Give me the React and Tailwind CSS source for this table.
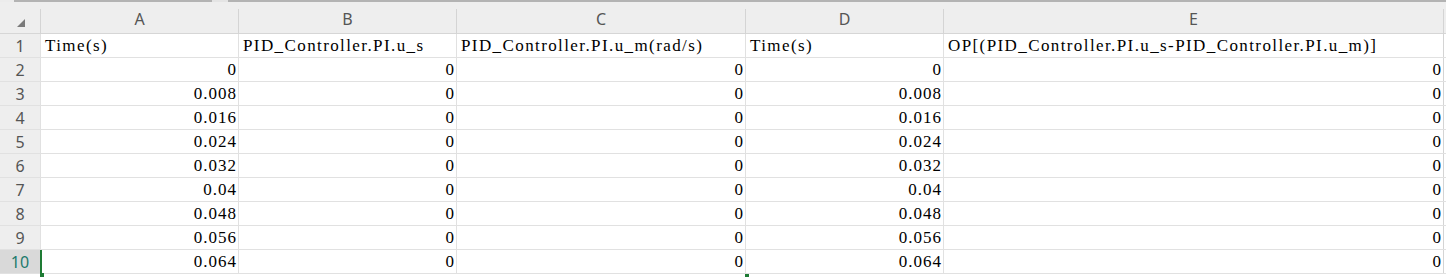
import React from "react";

const cols = [
  { key: "A", w: "w-[198px]" },
  { key: "B", w: "w-[218px]" },
  { key: "C", w: "w-[289px]" },
  { key: "D", w: "w-[198px]" },
  { key: "E", w: "w-[500px]" },
];

const header = [
  "Time(s)",
  "PID_Controller.PI.u_s",
  "PID_Controller.PI.u_m(rad/s)",
  "Time(s)",
  "OP[(PID_Controller.PI.u_s-PID_Controller.PI.u_m)]",
];

const times = ["0", "0.008", "0.016", "0.024", "0.032", "0.04", "0.048", "0.056", "0.064"];

const rows = times.map((t) => [t, "0", "0", t, "0"]);

const cellFont = { fontFamily: '"Liberation Serif", "Times New Roman", serif' };
const uiFont = { fontFamily: '"Noto Sans", "Open Sans", sans-serif' };

export default function App() {
  return (
    <div className="relative w-[1446px] h-[277px] overflow-hidden bg-white">
      {/* top edge */}
      <div className="flex h-[2px]">
        <div className="w-[14px] bg-[#ececec]" />
        <div className="w-[198px] bg-[#b3b3b3]" />
        <div className="w-[16px] bg-[#e4e4e4]" />
        <div className="flex-1 bg-[#b3b3b3]" />
      </div>
      {/* column header */}
      <div className="flex h-[32px] bg-[#eeeeee] border-b border-[#d6d6d6]" style={uiFont}>
        <div className="w-[40px] shrink-0 flex items-end justify-center pb-[6px]">
          <svg width="9" height="8" viewBox="0 0 9 8" className="ml-[2px]">
            <polygon points="8,0 8,8 0,8" fill="#7a7a7a" />
          </svg>
        </div>
        {cols.map((c) => (
          <div key={c.key} className={`${c.w} shrink-0 flex flex-col`}>
            <div className="flex h-full">
              <div className="w-px h-[25px] mt-[7px] bg-[#d4d4d4]" />
              <div className="flex-1 flex items-center justify-center text-[16px] text-[#555555] pt-[2px]">
                {c.key}
              </div>
            </div>
          </div>
        ))}
        <div className="w-px h-[25px] mt-[7px] bg-[#d4d4d4]" />
      </div>
      {/* rows */}
      {[header, ...rows].map((r, i) => {
        const sel = i === 9;
        return (
          <div key={i} className="flex h-[24px] border-b border-[#e1e1e1]">
            <div
              className={`w-[40px] shrink-0 flex items-center justify-center text-[16px] ${
                sel ? "bg-[#d9d9d9] text-[#1d7a6c]" : "bg-[#eeeeee] text-[#555555]"
              }`}
              style={uiFont}
            >
              {i + 1}
            </div>
            {r.map((v, j) => (
              <div
                key={j}
                className={`${cols[j].w} shrink-0 flex items-center border-l ${
                  sel && j === 0 ? "border-l-2 border-[#1e7b34]" : "border-[#e1e1e1]"
                } ${
                  i === 0 ? "justify-start pl-[4px] tracking-[1.4px]" : "justify-end pr-[1px] tracking-[1px]"
                } text-[17px] leading-none text-black whitespace-nowrap overflow-visible`}
                style={cellFont}
              >
                {v}
              </div>
            ))}
            <div className="w-px bg-[#d4d4d4]" />
          </div>
        );
      })}
      {/* selection markers */}
      <div className="absolute left-[40px] top-[273px] w-[4px] h-[4px] bg-[#1e7b34]" />
      <div className="absolute left-[745px] top-[274px] w-[4px] h-[3px] bg-[#1e7b34]" />
    </div>
  );
}
